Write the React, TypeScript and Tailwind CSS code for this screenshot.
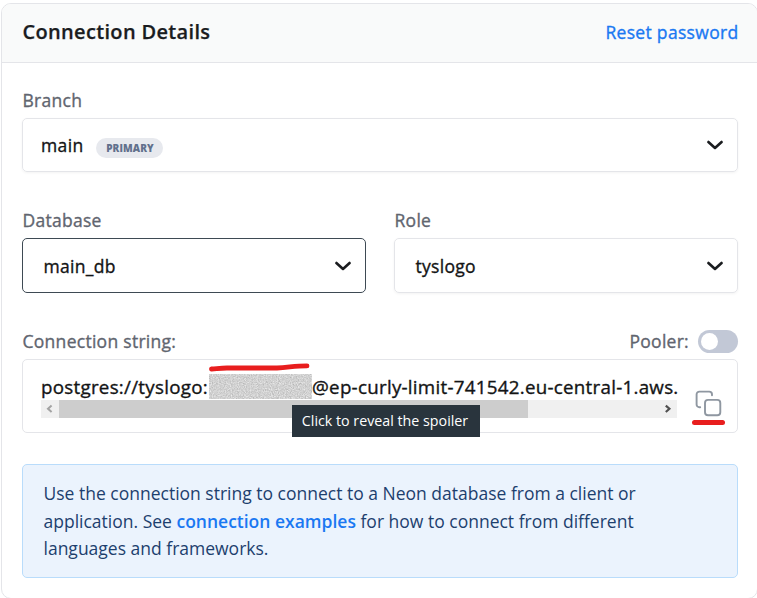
import React from "react";

function Chevron() {
  return (
    <svg width="18" height="18" viewBox="0 0 18 18" fill="none" className="shrink-0">
      <path d="M2.4 6 9 12 15.6 6" stroke="#1a1c1f" strokeWidth="2.6" strokeLinecap="round" strokeLinejoin="round" />
    </svg>
  );
}

function Label({ children }: { children: React.ReactNode }) {
  return (
    <div className="h-[26px] pl-[0.5px] text-[17.5px] leading-[26px] tracking-[0.28px] whitespace-nowrap text-[#61656f] [-webkit-text-stroke:0.35px_#61656f]">
      {children}
    </div>
  );
}

function Select({ value, active = false }: { value: string; active?: boolean }) {
  return (
    <div
      className={
        active
          ? "mt-[5px] flex h-[55px] items-center justify-between rounded-[5px] border border-[#3e4a54] pr-[13px] pl-[20.5px]"
          : "mt-[5px] flex h-[55px] items-center justify-between rounded-[5px] border border-[#e4e5e9] pr-[13px] pl-[20.5px] shadow-[0_1px_3px_rgba(0,0,0,0.05)]"
      }
    >
      <span className="pt-px text-[17.5px] leading-[26px] tracking-[0.3px] [-webkit-text-stroke:0.35px_#131415]">{value}</span>
      <Chevron />
    </div>
  );
}

function Spoiler() {
  return (
    <span className="relative h-[25px] w-[103px] shrink-0 bg-[#d2d2d2]">
      <svg width="103" height="25" className="block">
        <filter id="grain" x="0" y="0" width="100%" height="100%" colorInterpolationFilters="sRGB">
          <feTurbulence type="fractalNoise" baseFrequency="0.85" numOctaves="2" seed="4" />
          <feColorMatrix values="0.3 0 0 0 0.67  0.3 0 0 0 0.67  0.3 0 0 0 0.67  0 0 0 0 1" />
        </filter>
        <rect width="103" height="25" filter="url(#grain)" />
      </svg>
      <svg width="103" height="10" viewBox="0 0 103 10" fill="none" className="absolute -top-[11px] left-0">
        <path d="M2.5 6 C10 5.4 12 5 18 5 L68 5 C80 4.4 86 2.9 98 2.9" stroke="#e81e1e" strokeWidth="4.8" strokeLinecap="round" />
      </svg>
      <span className="absolute top-[31px] left-[83px] z-10 flex h-8 w-[188px] items-center justify-center bg-[#29343d] pr-[2px] text-[14.25px] leading-5 tracking-normal whitespace-nowrap text-white [-webkit-text-stroke:0px]">
        Click to reveal the spoiler
      </span>
    </span>
  );
}

function Scrollbar() {
  return (
    <div className="flex h-[18px] w-[636px] bg-[#f0f0f0]">
      <span className="flex w-[18px] items-center justify-center">
        <svg width="8" height="10" viewBox="0 0 8 10" fill="none">
          <path d="M5.6 1.6 2 4.8 5.6 8" stroke="#a3a3a3" strokeWidth="2" />
        </svg>
      </span>
      <span className="w-[469px] bg-[#cdcdcd]" />
      <span className="ml-auto flex w-[18px] items-center justify-center">
        <svg width="8" height="10" viewBox="0 0 8 10" fill="none">
          <path d="M1.8 1.6 5.4 4.8 1.8 8" stroke="#505050" strokeWidth="2.2" />
        </svg>
      </span>
    </div>
  );
}

function CopyButton() {
  return (
    <div className="flex w-[33px] flex-col">
      <svg width="28" height="28" viewBox="0 0 28 28" fill="none" stroke="#8f97a1" strokeWidth="1.9" strokeLinecap="round" strokeLinejoin="round" className="ml-0.5">
        <rect x="11" y="10.9" width="15.3" height="15.3" rx="3" />
        <path d="M6.2 18.2H5.4a2.8 2.8 0 0 1-2.8-2.8V5.4a2.8 2.8 0 0 1 2.8-2.8h9.8A2.8 2.8 0 0 1 18 5.4v.8" />
      </svg>
      <span className="mt-[3px] h-[5px] w-[33px] rounded-full bg-[#e81e1e]" />
    </div>
  );
}

export default function App() {
  return (
    <div className="h-[598px] w-[757px] overflow-hidden bg-white pt-[3px] pl-px font-['Open_Sans','Noto_Sans',sans-serif] text-[#131415]">
      <div className="h-[596px] w-[757px] overflow-hidden rounded-[10px] border border-[#e4e5e9]">
        <header className="flex h-[59px] items-center justify-between border-b border-[#e4e5e9] bg-[#f9fafa] pr-[18.5px] pb-0.5 pl-[20.5px]">
          <h1 className="text-[20px] leading-7 font-semibold tracking-[0.33px] text-[#1a1c1f] [-webkit-text-stroke:0.25px_#1a1c1f]">Connection Details</h1>
          <a className="text-[17.5px] leading-7 tracking-[0.32px] text-[#1a78f2] [-webkit-text-stroke:0.35px_#1a78f2]">Reset password</a>
        </header>

        <main className="flex flex-col pt-6 pr-[19px] pl-5">
          <Label>Branch</Label>
          <div className="mt-[5px] flex h-[54px] items-center rounded-[5px] border border-[#e4e5e9] pr-[13px] pl-[18px] shadow-[0_1px_3px_rgba(0,0,0,0.05)]">
            <span className="text-[17.5px] leading-[26px] tracking-[0.35px] [-webkit-text-stroke:0.35px_#131415]">main</span>
            <span className="mt-[5px] ml-[13px] flex h-5 w-[67px] items-center justify-center rounded-full bg-[#e7e9ee] text-[10px] leading-4 font-extrabold tracking-[0.1px] text-[#61708c]">
              PRIMARY
            </span>
            <span className="ml-auto">
              <Chevron />
            </span>
          </div>

          <div className="mt-[35px] grid grid-cols-2 gap-7">
            <div>
              <Label>Database</Label>
              <Select value="main_db" active />
            </div>
            <div>
              <Label>Role</Label>
              <Select value="tyslogo" />
            </div>
          </div>

          <div className="mt-[35px] flex items-center justify-between">
            <Label>Connection string:</Label>
            <div className="flex items-center gap-[9px]">
              <Label>Pooler:</Label>
              <span className="flex h-[23px] w-10 items-center rounded-full bg-[#c2c8d6] pl-[3px]">
                <span className="size-[17px] rounded-full bg-white" />
              </span>
            </div>
          </div>

          <div className="mt-[5px] flex h-[74px] rounded-[5px] border border-[#e4e5e9] pl-[18px]">
            <div className="w-[636px] shrink-0 pt-[14px]">
              <div className="flex h-[26px] text-[18.75px] leading-[26px] tracking-[0.27px] whitespace-nowrap [-webkit-text-stroke:0.35px_#131415]">
                <span className="w-[168px] shrink-0">postgres://tyslogo:</span>
                <Spoiler />
                <span>@ep-curly-limit-741542.eu-central-1.aws.</span>
              </div>
              <Scrollbar />
            </div>
            <div className="ml-[15px] pt-[29px]">
              <CopyButton />
            </div>
          </div>

          <p className="mt-[31px] h-[114px] rounded-[5px] border border-[#b9dcfb] bg-[#ebf3fd] pt-[15px] pl-[20.5px] text-[17.5px] leading-[27.5px] text-[#1d3f6e]">
            Use the connection string to connect to a Neon database from a client or
            <br />
            application. See <a className="font-semibold text-[#1a78f2]">connection examples</a> for how to connect from different
            <br />
            languages and frameworks.
          </p>
        </main>
      </div>
    </div>
  );
}
